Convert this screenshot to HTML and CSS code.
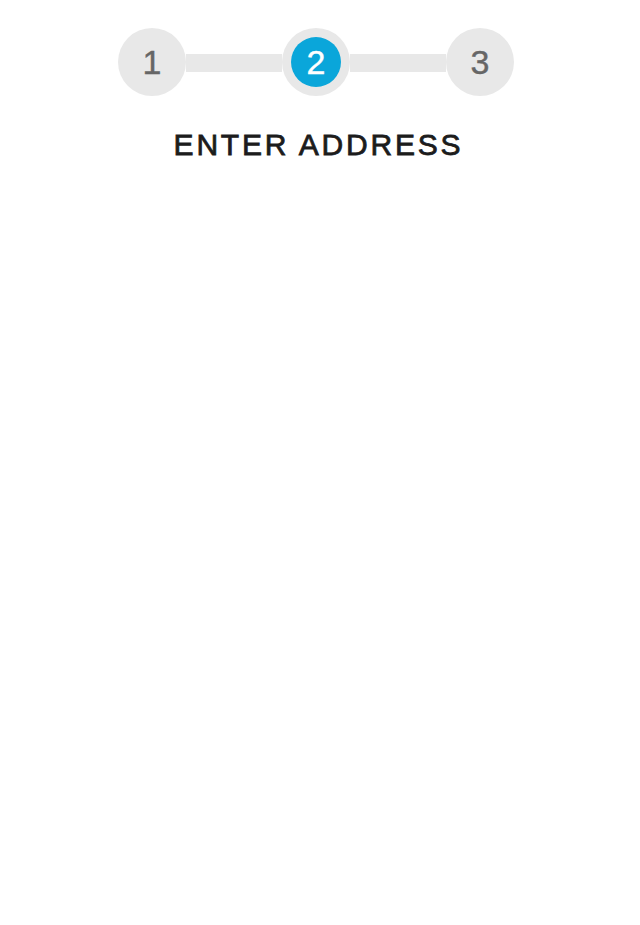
FILE: index.html
```html
<!DOCTYPE html>
<html>
<head>
<meta charset="utf-8">
<link rel="stylesheet" href="styles.css">
</head>
<body>
<div class="page">
  <div class="stepper">
    <div class="step"><span class="num">1</span></div>
    <div class="bar"></div>
    <div class="step active"><span class="num">2</span></div>
    <div class="bar"></div>
    <div class="step"><span class="num">3</span></div>
  </div>
  <h1 class="title">ENTER ADDRESS</h1>
</div>
</body>
</html>
```
FILE: styles.css
```css
html, body {
  margin: 0;
  padding: 0;
  background: #ffffff;
}
.page {
  width: 640px;
  height: 925px;
  font-family: "Liberation Sans", Arial, sans-serif;
}
.stepper {
  display: flex;
  align-items: center;
  padding-top: 28px;
  padding-left: 118px;
}
.step {
  width: 68px;
  height: 68px;
  border-radius: 50%;
  background: #e8e8e8;
  display: flex;
  align-items: center;
  justify-content: center;
  flex: none;
}
.step .num {
  font-size: 34px;
  line-height: 1;
  color: #666666;
  -webkit-text-stroke: 0.4px #666666;
}
.step.active .num {
  width: 50px;
  height: 50px;
  border-radius: 50%;
  background: #0aa6da;
  color: #ffffff;
  -webkit-text-stroke: 0.4px #ffffff;
  display: flex;
  align-items: center;
  justify-content: center;
}
.bar {
  width: 96px;
  height: 18px;
  margin-top: 2px;
  background: #e8e8e8;
  flex: none;
}
.title {
  margin: 32px 0 0 0;
  padding-right: 3px;
  text-align: center;
  font-size: 30px;
  font-weight: normal;
  letter-spacing: 2.8px;
  color: #1c1c1c;
  -webkit-text-stroke: 0.8px #1c1c1c;
  line-height: 34px;
}
```
